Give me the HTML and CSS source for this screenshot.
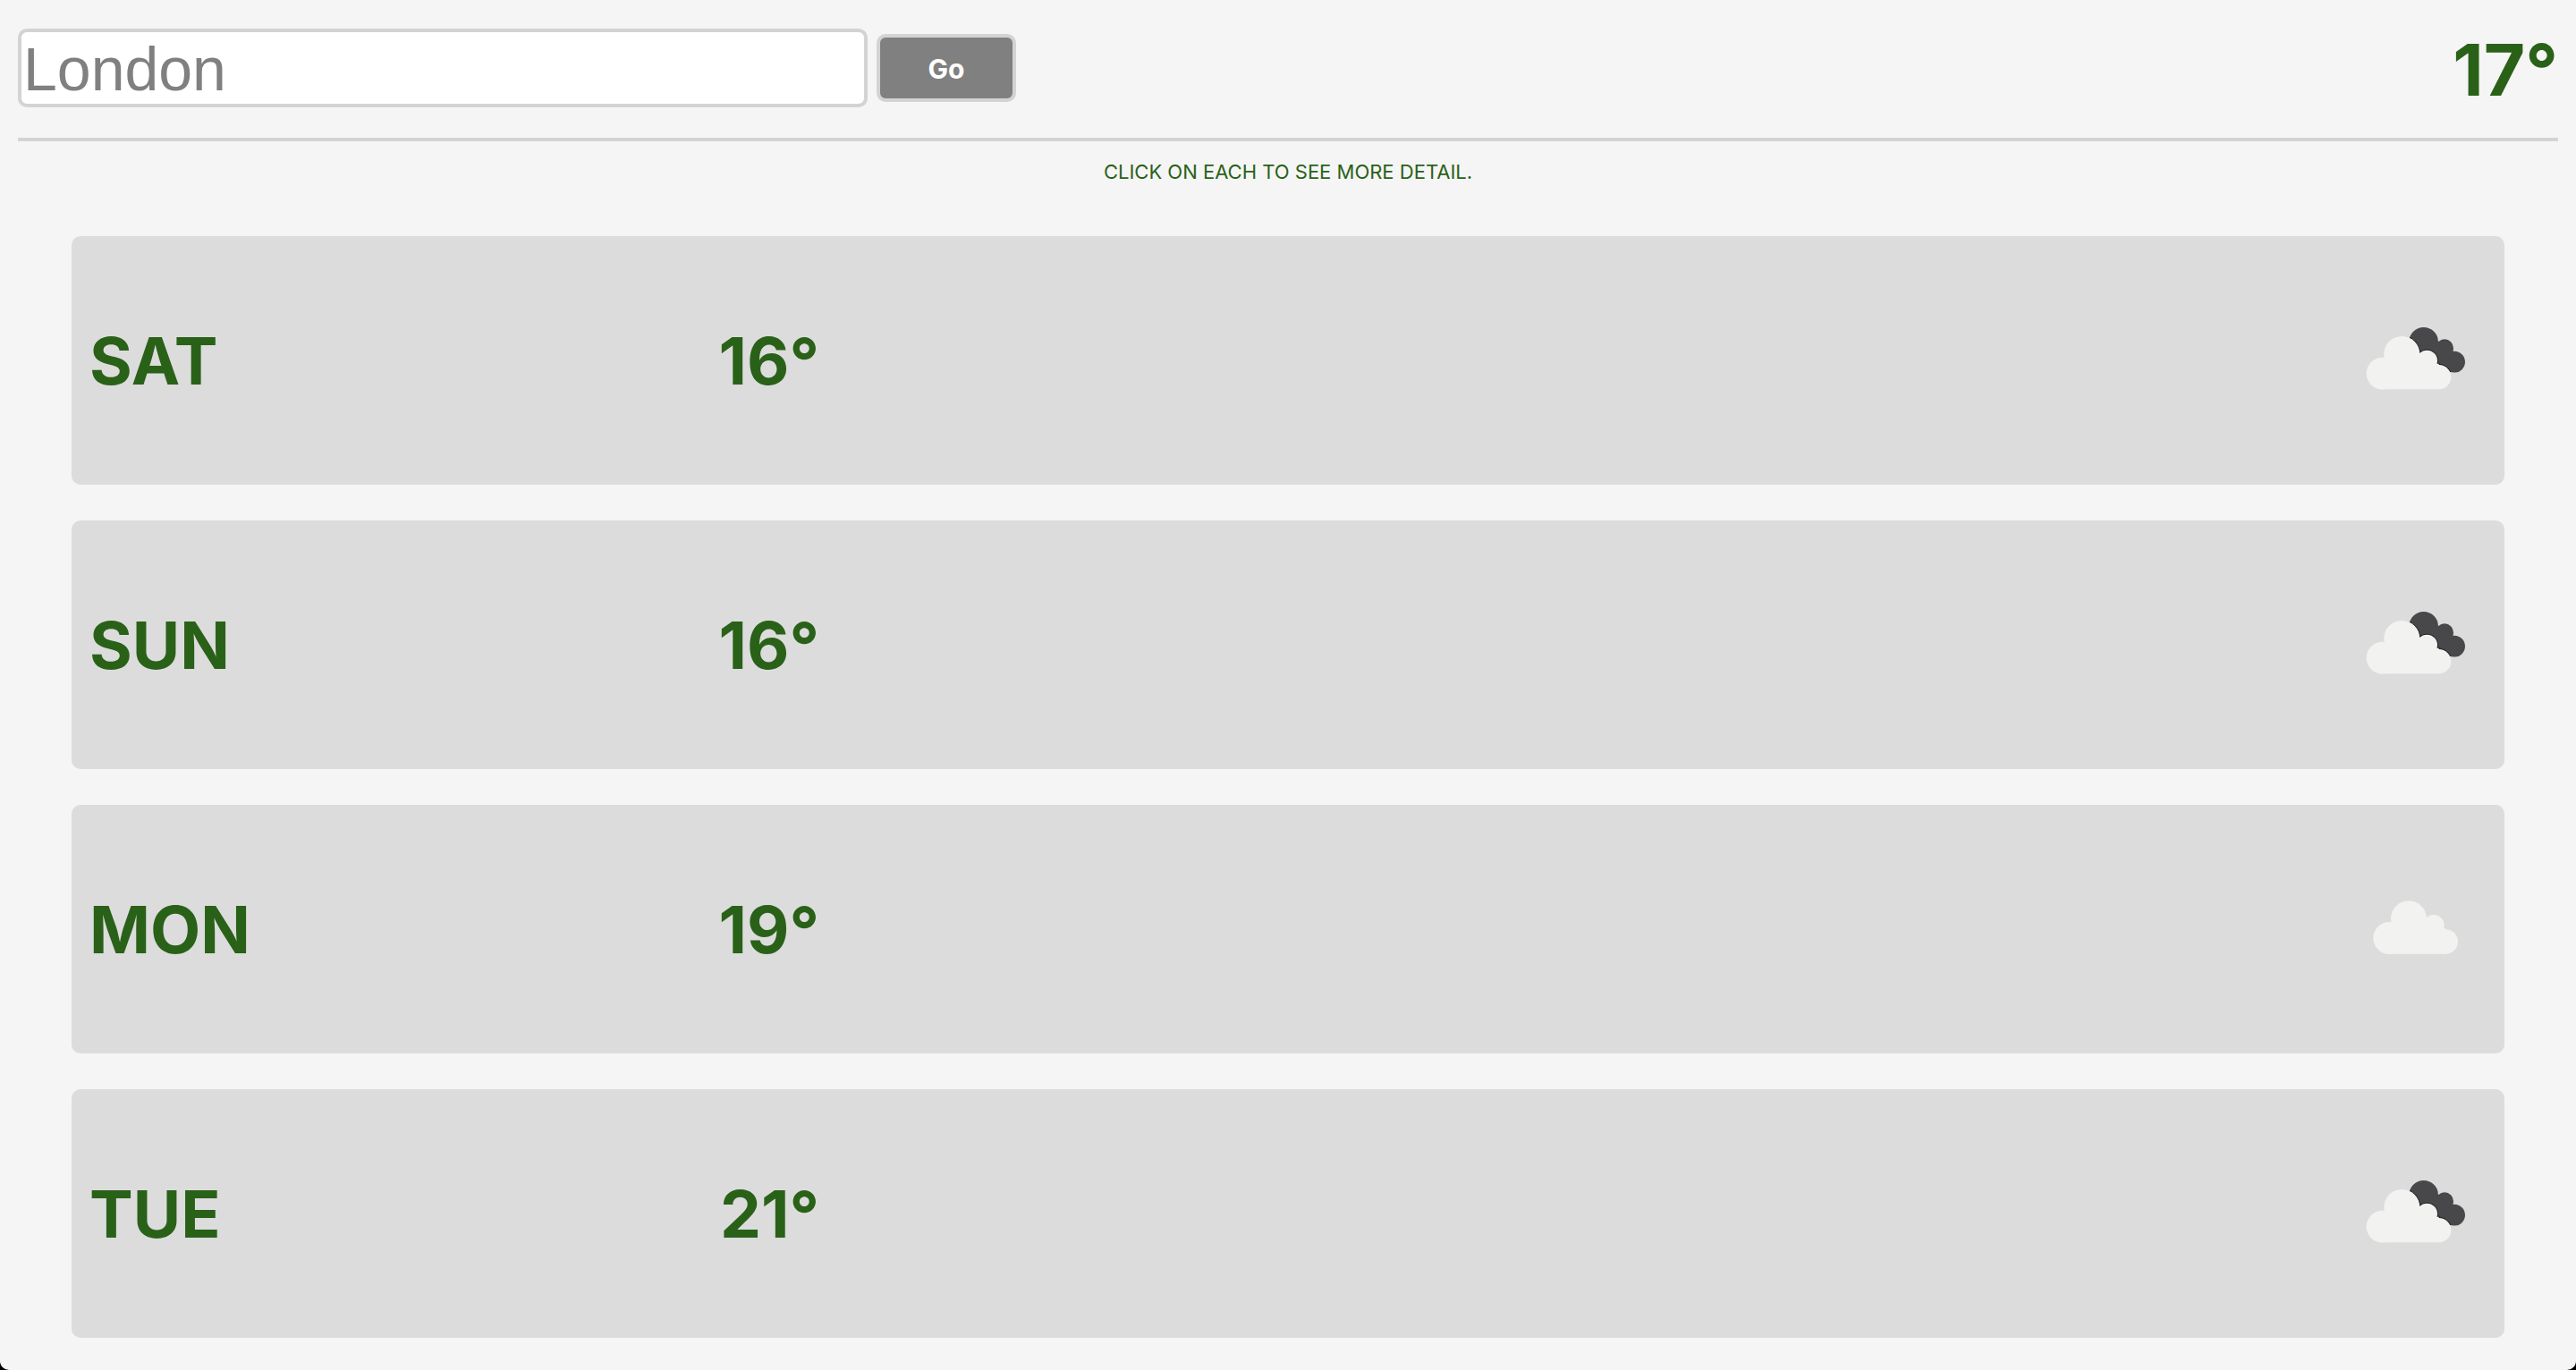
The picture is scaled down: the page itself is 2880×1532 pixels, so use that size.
FILE: index.html
```html
<!DOCTYPE html>
<html lang="en">
<head>
  <meta charset="utf-8">
  <meta name="viewport" content="width=device-width, initial-scale=1">
  <title>Weather in London</title>
  <link rel="stylesheet" href="styles.css">
</head>
<body>
  <svg class="sprite" aria-hidden="true">
    <defs>
      <g id="cloud">
        <circle cx="131" cy="233" r="54"/>
        <circle cx="196" cy="168" r="60"/>
        <circle cx="280" cy="190" r="35"/>
        <circle cx="320" cy="245" r="41"/>
        <path d="M131 200H320V286H131Z"/>
      </g>
      <clipPath id="rear-shape">
        <circle cx="269" cy="127" r="49"/>
        <circle cx="339" cy="148" r="30"/>
        <circle cx="372" cy="194" r="36"/>
        <path d="M235 120L310 115L350 165L375 229L320 225Z"/>
      </clipPath>
      <symbol id="icon-broken" viewBox="0 -51 480 480">
        <g clip-path="url(#rear-shape)">
          <path class="rear" d="M200 60H420V240H200Z"/>
          <use href="#cloud" class="shade"/>
        </g>
        <use href="#cloud" class="front"/>
      </symbol>
      <symbol id="icon-cloud" viewBox="0 -51 480 480">
        <use href="#cloud" class="front" x="23" y="-14"/>
      </symbol>
    </defs>
  </svg>

  <main class="app">
    <header class="header">
      <form class="search">
        <input class="search-input" type="text" placeholder="London" aria-label="City">
        <button class="search-button" type="button">Go</button>
      </form>
      <h1 class="current">17°</h1>
    </header>
    <p class="hint">CLICK ON EACH TO SEE MORE DETAIL.</p>
    <div class="days">
      <button class="day" type="button">
        <span class="summary"><span>SAT</span><span>16°</span></span>
        <svg class="icon" role="img" aria-label="Broken clouds"><use href="#icon-broken"/></svg>
      </button>
      <button class="day" type="button">
        <span class="summary"><span>SUN</span><span>16°</span></span>
        <svg class="icon" role="img" aria-label="Broken clouds"><use href="#icon-broken"/></svg>
      </button>
      <button class="day" type="button">
        <span class="summary"><span>MON</span><span>19°</span></span>
        <svg class="icon" role="img" aria-label="Cloudy"><use href="#icon-cloud"/></svg>
      </button>
      <button class="day" type="button">
        <span class="summary"><span>TUE</span><span>21°</span></span>
        <svg class="icon" role="img" aria-label="Broken clouds"><use href="#icon-broken"/></svg>
      </button>
    </div>
  </main>
</body>
</html>
```
FILE: styles.css
```css
* {
  box-sizing: border-box;
}

html {
  background: #000;
}

body {
  margin: 0;
  color: #2a6118;
  font-family: Inter, "Liberation Sans", sans-serif;
}

button {
  font-family: inherit;
}

.sprite {
  display: block;
  width: 0;
  height: 0;
}

.app {
  min-height: 100vh;
  padding: 0 20px 36px;
  background: #f5f5f5;
  border-radius: 0 0 10px 10px;
}

.header {
  display: flex;
  align-items: center;
  justify-content: space-between;
  height: 158px;
  padding-bottom: 2px;
  border-bottom: 4px solid #d3d3d3;
}

.search {
  display: flex;
  flex: 1;
  align-items: center;
  gap: 10px;
}

.search-input {
  width: 950px;
  max-width: 60%;
  height: 88px;
  padding: 2px 2px 0;
  border: 4px solid #d3d3d3;
  border-radius: 10px;
  background: #fff;
  color: #808080;
  font-family: "Liberation Sans", sans-serif;
  font-size: 68px;
}

.search-input::placeholder {
  color: #808080;
  opacity: 1;
}

.search-button {
  width: 156px;
  height: 76px;
  padding: 2px 0 0;
  border: 4px solid #d3d3d3;
  border-radius: 10px;
  background: #808080;
  color: #fff;
  font-size: 30px;
  font-weight: 700;
}

.current {
  margin: 0;
  padding-top: 4px;
  font-size: 80px;
  line-height: 96px;
}

.hint {
  margin: 0;
  padding: 20px 0 58px;
  font-size: 22px;
  line-height: 28px;
  text-align: center;
}

.days {
  display: grid;
  gap: 40px;
  padding: 0 60px;
}

.day {
  display: flex;
  align-items: center;
  justify-content: space-between;
  width: 100%;
  height: 278px;
  padding: 0 20px;
  border: 0;
  border-radius: 10px;
  background: #dcdcdc;
  color: inherit;
  font-size: 73px;
  font-weight: 700;
}

.summary {
  display: flex;
  justify-content: space-between;
  width: 816px;
}

.icon {
  width: 160px;
  height: 160px;
}

.rear {
  fill: #48484a;
}

.shade {
  fill: #222224;
  stroke: #222224;
  stroke-width: 6px;
}

.front {
  fill: #f2f2f0;
}
```
